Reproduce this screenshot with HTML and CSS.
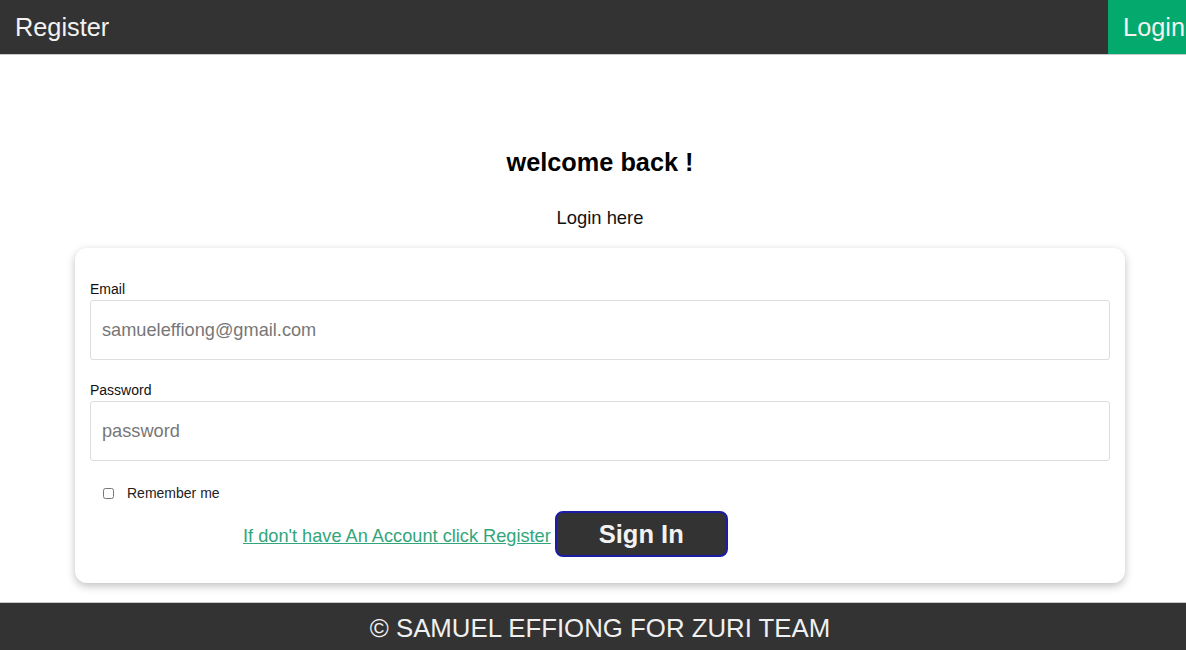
FILE: index.html
```html
<!DOCTYPE html>
<html lang="en">
<head>
<meta charset="utf-8">
<title>Login</title>
<link rel="stylesheet" href="styles.css">
</head>
<body>
<div class="page">
  <nav class="topnav">
    <a class="nav-link" href="#">Register</a>
    <a class="nav-link active" href="#">Login</a>
  </nav>
  <main class="main">
    <h2 class="title">welcome back !</h2>
    <p class="subtitle">Login here</p>
    <form class="card">
      <label class="label" for="email">Email</label>
      <input class="field" id="email" type="email" placeholder="samueleffiong@gmail.com">
      <label class="label label-pw" for="pw">Password</label>
      <input class="field" id="pw" type="password" placeholder="password">
      <div class="remember">
        <input class="check" type="checkbox" id="rem">
        <label for="rem" class="remember-text">Remember me</label>
      </div>
      <div class="actions">
        <a class="reg-link" href="#">If don't have An Account click Register</a>
        <button class="btn" type="button">Sign In</button>
      </div>
    </form>
  </main>
  <footer class="footer">© SAMUEL EFFIONG FOR ZURI TEAM</footer>
</div>
</body>
</html>
```
FILE: styles.css
```css
html, body {
  margin: 0;
  padding: 0;
  overflow: hidden;
  background: #fff;
}
body {
  font-family: "Liberation Sans", Arial, sans-serif;
}
.page {
  width: 1200px;
  height: 650px;
  display: flex;
  flex-direction: column;
}
.topnav {
  height: 55px;
  background: #333;
  display: flex;
  justify-content: space-between;
  border-bottom: 1px solid #c8c8c8;
  box-sizing: border-box;
}
.nav-link {
  color: #f2f2f2;
  text-decoration: none;
  font-size: 25.3px;
  padding: 0 16px 0 15px;
  display: flex;
  align-items: center;
  height: 54px;
}
.nav-link.active {
  background: #04AA6D;
  padding: 0 15px 0 15px;
}
.main {
  flex: 1;
  display: flex;
  flex-direction: column;
  align-items: center;
}
.title {
  font-size: 25.3px;
  font-weight: bold;
  margin: 93px 0 0;
  line-height: 28px;
  color: #000;
}
.subtitle {
  font-size: 18.4px;
  margin: 31px 0 0;
  line-height: 22px;
  color: #111;
}
.card {
  margin-top: 19px;
  width: 1050px;
  box-sizing: border-box;
  background: #fff;
  border-radius: 12px;
  box-shadow: 0 3px 8px rgba(0,0,0,0.25);
  padding: 33px 15px 26px;
  display: flex;
  flex-direction: column;
}
.label {
  font-size: 14px;
  color: #111;
  line-height: 16px;
  margin-bottom: 3px;
}
.label-pw {
  margin-top: 22px;
}
.field {
  height: 60px;
  box-sizing: border-box;
  border: 1px solid #ddd;
  border-radius: 3px;
  padding: 0 11px;
  font-size: 18.2px;
  font-family: "Liberation Sans", Arial, sans-serif;
  color: #333;
}
.field::placeholder {
  color: #777;
}
.remember {
  display: flex;
  align-items: center;
  margin-top: 24px;
  padding-left: 13px;
}
.check {
  width: 11px;
  height: 11px;
  margin: 0 13px 0 0;
}
.remember-text {
  font-size: 14px;
  color: #222;
}
.actions {
  display: flex;
  align-items: center;
  padding-left: 153px;
  margin-top: 10px;
}
.reg-link {
  color: #32a67a;
  font-size: 18.2px;
  text-decoration: underline;
  margin-top: 4px;
  margin-right: 4px;
}
.btn {
  width: 173px;
  height: 46px;
  background: #333;
  color: #f2f2f2;
  border: 2px solid #1c1ca8;
  border-radius: 8px;
  font-family: "Liberation Sans", Arial, sans-serif;
  font-size: 25.5px;
  font-weight: bold;
  cursor: pointer;
}
.footer {
  height: 48px;
  background: #333;
  color: #f0f0f0;
  border-top: 1px solid #c8c8c8;
  box-sizing: border-box;
  display: flex;
  align-items: center;
  justify-content: center;
  padding-top: 3px;
  font-size: 25.8px;
}
```
